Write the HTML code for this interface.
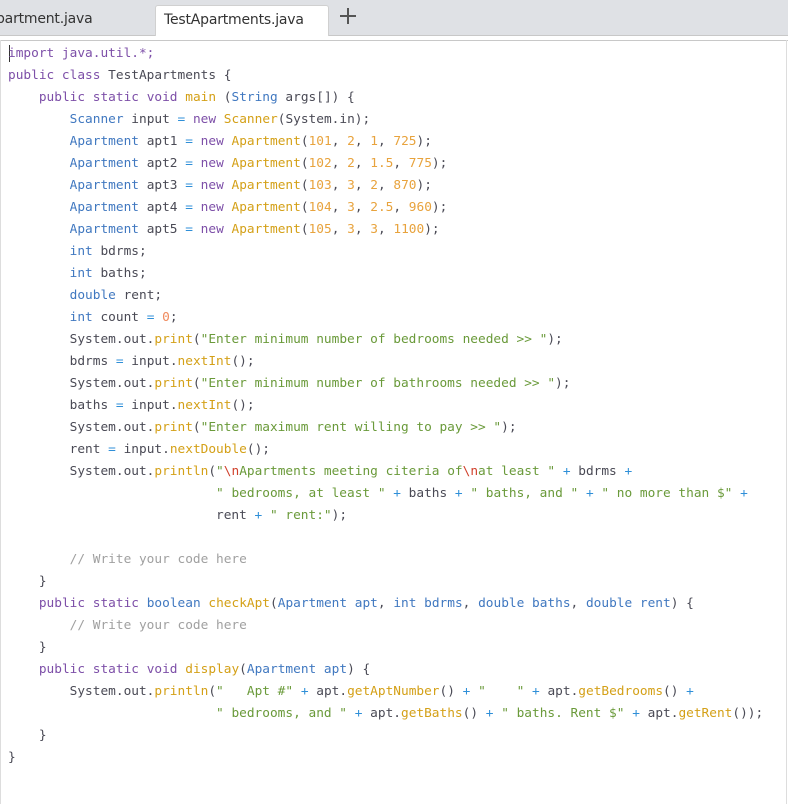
<!DOCTYPE html>
<html><head><meta charset="utf-8"><style>
html,body{margin:0;padding:0;background:#fff;width:788px;height:804px;overflow:hidden;}
.bar{position:absolute;left:0;top:0;width:788px;height:35px;background:#dfe1e5;border-bottom:1px solid #c8c8c8;}
.tab{position:absolute;top:5px;height:31px;font-family:"DejaVu Sans","Liberation Sans",sans-serif;font-size:14px;color:#333;line-height:28px;letter-spacing:-0.2px;}
.t1{left:-4px;}
.t2{left:155px;width:174px;background:#fff;border:1px solid #d0d0d0;border-bottom:none;border-radius:3px 3px 0 0;box-sizing:border-box;padding-left:8px;height:31px;}
.plus{position:absolute;left:340px;top:8px;width:16px;height:16px;}
.plus:before{content:"";position:absolute;left:7px;top:0;width:2px;height:16px;background:#555;}
.plus:after{content:"";position:absolute;left:0;top:7px;width:16px;height:2px;background:#555;}
.sep{position:absolute;left:0;top:40px;width:788px;border-top:1px solid #c8c8c8;}
.lb{position:absolute;left:0;top:40px;width:1px;height:764px;background:#ddd;}
.rb{position:absolute;left:786px;top:40px;width:1px;height:764px;background:#ddd;}
pre{position:absolute;left:8px;top:43px;margin:0;font-family:"DejaVu Sans Mono","Liberation Mono",monospace;font-size:12.8px;line-height:22px;color:#4a4a55;}
.k{color:#7d4fa8}.t{color:#4078c0}.f{color:#d4a017}.n{color:#e8a33d}.z{color:#f08a5d}.s{color:#6a9a3a}.o{color:#2f8fd8}.c{color:#a0a0a0}.e{color:#d0402b}
.cur{position:absolute;left:9px;top:45px;width:1px;height:17px;background:#333;}
</style></head><body>
<div class="bar"></div>
<div class="tab t1">partment.java</div>
<div class="tab t2">TestApartments.java</div>
<div class="plus"></div>
<div class="sep"></div>
<div class="lb"></div><div class="rb"></div>
<div class="cur"></div>
<pre><span class="k">import java.util.*;</span>
<span class="k">public class</span> TestApartments {
    <span class="k">public static void</span> <span class="f">main</span> (<span class="t">String</span> args[]) {
        <span class="t">Scanner</span> input <span class="o">=</span> <span class="k">new</span> <span class="f">Scanner</span>(System.in);
        <span class="t">Apartment</span> apt1 <span class="o">=</span> <span class="k">new</span> <span class="f">Apartment</span>(<span class="n">101</span>, <span class="n">2</span>, <span class="n">1</span>, <span class="n">725</span>);
        <span class="t">Apartment</span> apt2 <span class="o">=</span> <span class="k">new</span> <span class="f">Apartment</span>(<span class="n">102</span>, <span class="n">2</span>, <span class="n">1.5</span>, <span class="n">775</span>);
        <span class="t">Apartment</span> apt3 <span class="o">=</span> <span class="k">new</span> <span class="f">Apartment</span>(<span class="n">103</span>, <span class="n">3</span>, <span class="n">2</span>, <span class="n">870</span>);
        <span class="t">Apartment</span> apt4 <span class="o">=</span> <span class="k">new</span> <span class="f">Apartment</span>(<span class="n">104</span>, <span class="n">3</span>, <span class="n">2.5</span>, <span class="n">960</span>);
        <span class="t">Apartment</span> apt5 <span class="o">=</span> <span class="k">new</span> <span class="f">Apartment</span>(<span class="n">105</span>, <span class="n">3</span>, <span class="n">3</span>, <span class="n">1100</span>);
        <span class="t">int</span> bdrms;
        <span class="t">int</span> baths;
        <span class="t">double</span> rent;
        <span class="t">int</span> count <span class="o">=</span> <span class="z">0</span>;
        System.out.<span class="f">print</span>(<span class="s">"Enter minimum number of bedrooms needed &gt;&gt; "</span>);
        bdrms <span class="o">=</span> input.<span class="f">nextInt</span>();
        System.out.<span class="f">print</span>(<span class="s">"Enter minimum number of bathrooms needed &gt;&gt; "</span>);
        baths <span class="o">=</span> input.<span class="f">nextInt</span>();
        System.out.<span class="f">print</span>(<span class="s">"Enter maximum rent willing to pay &gt;&gt; "</span>);
        rent <span class="o">=</span> input.<span class="f">nextDouble</span>();
        System.out.<span class="f">println</span>(<span class="s">"<span class="e">\n</span>Apartments meeting citeria of<span class="e">\n</span>at least "</span> <span class="o">+</span> bdrms <span class="o">+</span>
                           <span class="s">" bedrooms, at least "</span> <span class="o">+</span> baths <span class="o">+</span> <span class="s">" baths, and "</span> <span class="o">+</span> <span class="s">" no more than $"</span> <span class="o">+</span>
                           rent <span class="o">+</span> <span class="s">" rent:"</span>);

        <span class="c">// Write your code here</span>
    }
    <span class="k">public static</span> <span class="t">boolean</span> <span class="f">checkApt</span>(<span class="t">Apartment apt</span>, <span class="t">int bdrms</span>, <span class="t">double baths</span>, <span class="t">double rent</span>) {
        <span class="c">// Write your code here</span>
    }
    <span class="k">public static void</span> <span class="f">display</span>(<span class="t">Apartment apt</span>) {
        System.out.<span class="f">println</span>(<span class="s">"   Apt #"</span> <span class="o">+</span> apt.<span class="f">getAptNumber</span>() <span class="o">+</span> <span class="s">"    "</span> <span class="o">+</span> apt.<span class="f">getBedrooms</span>() <span class="o">+</span>
                           <span class="s">" bedrooms, and "</span> <span class="o">+</span> apt.<span class="f">getBaths</span>() <span class="o">+</span> <span class="s">" baths. Rent $"</span> <span class="o">+</span> apt.<span class="f">getRent</span>());
    }
}</pre>
</body></html>
